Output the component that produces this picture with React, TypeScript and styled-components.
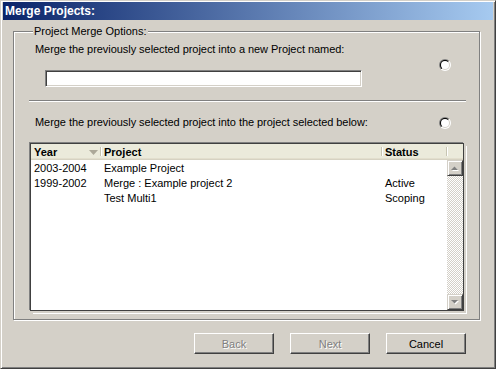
import React from 'react';
import styled, { createGlobalStyle } from 'styled-components';

const Global = createGlobalStyle`
  html, body { margin: 0; padding: 0; background: #D4D0C8; }
  body { font-family: "Liberation Sans", Arial, sans-serif; font-size: 11px; color: #000; }
  * { box-sizing: border-box; }
`;

const Window = styled.div`
  width: 496px;
  height: 369px;
  display: flex;
  flex-direction: column;
  background: #D4D0C8;
  border: 1px solid;
  border-color: #D4D0C8 #404040 #404040 #D4D0C8;
  box-shadow: inset 1px 1px 0 #fff, inset -1px -1px 0 #808080;
  padding: 1px 2px 2px 2px;
`;

const TitleBar = styled.div`
  height: 18px;
  display: flex;
  align-items: center;
  padding-left: 2px;
  background: linear-gradient(to right, #0A246A, #A6CAF0);
  color: #fff;
  font-weight: bold;
  font-size: 12px;
  line-height: 18px;
`;

const Body = styled.div`
  display: flex;
  flex-direction: column;
  padding: 5px 13px 0 10px;
`;

const GroupBox = styled.fieldset`
  margin: 0;
  height: 295px;
  border: 1px solid #808080;
  box-shadow: 1px 1px 0 #fff, inset 1px 1px 0 #fff;
  padding: 5px 13px 0 15px;
  display: flex;
  flex-direction: column;
  min-width: 0;
`;

const Legend = styled.legend`
  margin-left: 4px;
  padding: 0 1px;
  background: #D4D0C8;
  line-height: 13px;
  font-size: 11px;
`;

const OptionRow = styled.div<{ $gap?: number }>`
  display: flex;
  align-items: center;
  justify-content: space-between;
  padding-left: 6px;
  margin-top: ${(p) => p.$gap ?? 0}px;
`;

const OptionCol = styled.div`
  display: flex;
  flex-direction: column;
`;

const Label = styled.div`
  line-height: 13px;
  white-space: nowrap;
  letter-spacing: -0.05px;
`;

const TextInput = styled.div`
  width: 317px;
  height: 17px;
  margin: 14px 0 0 10px;
  background: #fff;
  border: 1px solid;
  border-color: #808080 #fff #fff #808080;
  box-shadow: inset 1px 1px 0 #404040, inset -1px -1px 0 #D4D0C8;
`;

const RadioBox = styled.span`
  width: 12px;
  height: 12px;
  margin-right: 15px;
  flex: none;
  display: block;
  svg { display: block; }
`;

const Radio = () => (
  <RadioBox>
    <svg width="12" height="12" viewBox="0 0 12 12">
      <defs>
        <linearGradient id="rOuter" x1="0" y1="0" x2="1" y2="1">
          <stop offset="0.5" stopColor="#808080" />
          <stop offset="0.5" stopColor="#ffffff" />
        </linearGradient>
        <linearGradient id="rInner" x1="0" y1="0" x2="1" y2="1">
          <stop offset="0.5" stopColor="#000000" />
          <stop offset="0.5" stopColor="#D4D0C8" />
        </linearGradient>
      </defs>
      <circle cx="6" cy="6" r="6" fill="url(#rOuter)" />
      <circle cx="6" cy="6" r="5" fill="url(#rInner)" />
      <circle cx="6" cy="6" r="4" fill="#fff" />
    </svg>
  </RadioBox>
);

const Separator = styled.div`
  margin-top: 13px;
  height: 2px;
  border-top: 1px solid #808080;
  border-bottom: 1px solid #fff;
`;

const ListBox = styled.div`
  margin: 14px 0 0 1px;
  width: 434px;
  height: 168px;
  border: 1px solid #404040;
  background: #fff;
  box-shadow: -1px -1px 0 #808080, 2px 2px 0 #D4D0C8, 3px 3px 0 #fff;
  display: flex;
  flex-direction: column;
`;

const Header = styled.div`
  height: 16px;
  display: flex;
  background: #EBEADB;
  box-shadow: inset 0 -1px 0 #D6D2C2, inset 0 -2px 0 #E2DECD;
  font-weight: bold;
  line-height: 15px;
  flex: none;
`;

const HeadCell = styled.div<{ $w: number; $divider?: boolean }>`
  position: relative;
  width: ${(p) => p.$w}px;
  flex: none;
  display: flex;
  align-items: center;
  justify-content: space-between;
  padding: 0 3px;
  &::after {
    content: '';
    display: ${(p) => (p.$divider ? 'block' : 'none')};
    position: absolute;
    right: 0;
    top: 3px;
    bottom: 4px;
    width: 1px;
    background: #C7C5B2;
    box-shadow: 1px 0 0 #fff;
  }
`;

const BodyArea = styled.div`
  flex: 1;
  display: flex;
  min-height: 0;
`;

const Rows = styled.div`
  flex: 1;
  padding-top: 1px;
`;

const Row = styled.div`
  display: flex;
  height: 15px;
  line-height: 15px;
`;

const Cell = styled.div<{ $w?: number }>`
  width: ${(p) => (p.$w ? `${p.$w}px` : 'auto')};
  flex: ${(p) => (p.$w ? 'none' : '1')};
  padding-left: 3px;
  white-space: nowrap;
`;

const ScrollBar = styled.div`
  width: 16px;
  display: flex;
  flex-direction: column;
  flex: none;
`;

const ScrollBtn = styled.div`
  width: 16px;
  height: 16px;
  flex: none;
  display: flex;
  align-items: center;
  justify-content: center;
  background: #D4D0C8;
  border: 1px solid;
  border-color: #D4D0C8 #404040 #404040 #D4D0C8;
  box-shadow: inset 1px 1px 0 #fff, inset -1px -1px 0 #808080;
`;

const Track = styled.div`
  flex: 1;
  background: conic-gradient(#fff 25%, #D4D0C8 0 50%, #fff 0 75%, #D4D0C8 0) 0 0 / 2px 2px;
`;

const ButtonRow = styled.div`
  display: flex;
  justify-content: flex-end;
  gap: 16px;
  margin-top: 13px;
  padding-right: 14px;
`;

const Button = styled.div<{ $disabled?: boolean }>`
  width: 80px;
  height: 21px;
  display: flex;
  align-items: center;
  justify-content: center;
  background: #D4D0C8;
  border: 1px solid;
  border-color: #fff #404040 #404040 #fff;
  box-shadow: inset -1px -1px 0 #808080;
  font-weight: normal;
  color: ${(p) => (p.$disabled ? '#808080' : '#000')};
  text-shadow: ${(p) => (p.$disabled ? '1px 1px 0 #fff' : 'none')};
`;

const Arrow = ({ up }: { up?: boolean }) => (
  <svg width="8" height="5" viewBox="0 0 8 5">
    {up ? (
      <>
        <polygon points="1,5 4.5,1.5 8,5" fill="#fff" />
        <polygon points="0,4 3.5,0.5 7,4" fill="#808080" />
      </>
    ) : (
      <>
        <polygon points="1,1 8,1 4.5,4.5" fill="#fff" />
        <polygon points="0,0 7,0 3.5,3.5" fill="#808080" />
      </>
    )}
  </svg>
);

const SortArrow = () => (
  <svg width="9" height="5" viewBox="0 0 9 5">
    <polygon points="0,0 9,0 4.5,5" fill="#ACA899" />
  </svg>
);

const rows = [
  { year: '2003-2004', project: 'Example Project', status: '' },
  { year: '1999-2002', project: 'Merge : Example project 2', status: 'Active' },
  { year: '', project: 'Test Multi1', status: 'Scoping' },
];

export default function App() {
  return (
    <>
      <Global />
      <Window>
        <TitleBar>Merge Projects:</TitleBar>
        <Body>
          <GroupBox>
            <Legend>Project Merge Options:</Legend>
            <OptionRow>
              <OptionCol>
                <Label>Merge the previously selected project into a new Project named:</Label>
                <TextInput />
              </OptionCol>
              <Radio />
            </OptionRow>
            <Separator />
            <OptionRow $gap={14}>
              <Label>Merge the previously selected project into the project selected below:</Label>
              <Radio />
            </OptionRow>
            <ListBox>
              <Header>
                <HeadCell $w={70} $divider>
                  <span>Year</span>
                  <SortArrow />
                </HeadCell>
                <HeadCell $w={281} $divider>Project</HeadCell>
                <HeadCell $w={65} $divider>Status</HeadCell>
                <HeadCell $w={16} />
              </Header>
              <BodyArea>
                <Rows>
                  {rows.map((r, i) => (
                    <Row key={i}>
                      <Cell $w={70}>{r.year}</Cell>
                      <Cell $w={281}>{r.project}</Cell>
                      <Cell>{r.status}</Cell>
                    </Row>
                  ))}
                </Rows>
                <ScrollBar>
                  <ScrollBtn><Arrow up /></ScrollBtn>
                  <Track />
                  <ScrollBtn><Arrow /></ScrollBtn>
                </ScrollBar>
              </BodyArea>
            </ListBox>
          </GroupBox>
          <ButtonRow>
            <Button $disabled>Back</Button>
            <Button $disabled>Next</Button>
            <Button>Cancel</Button>
          </ButtonRow>
        </Body>
      </Window>
    </>
  );
}
